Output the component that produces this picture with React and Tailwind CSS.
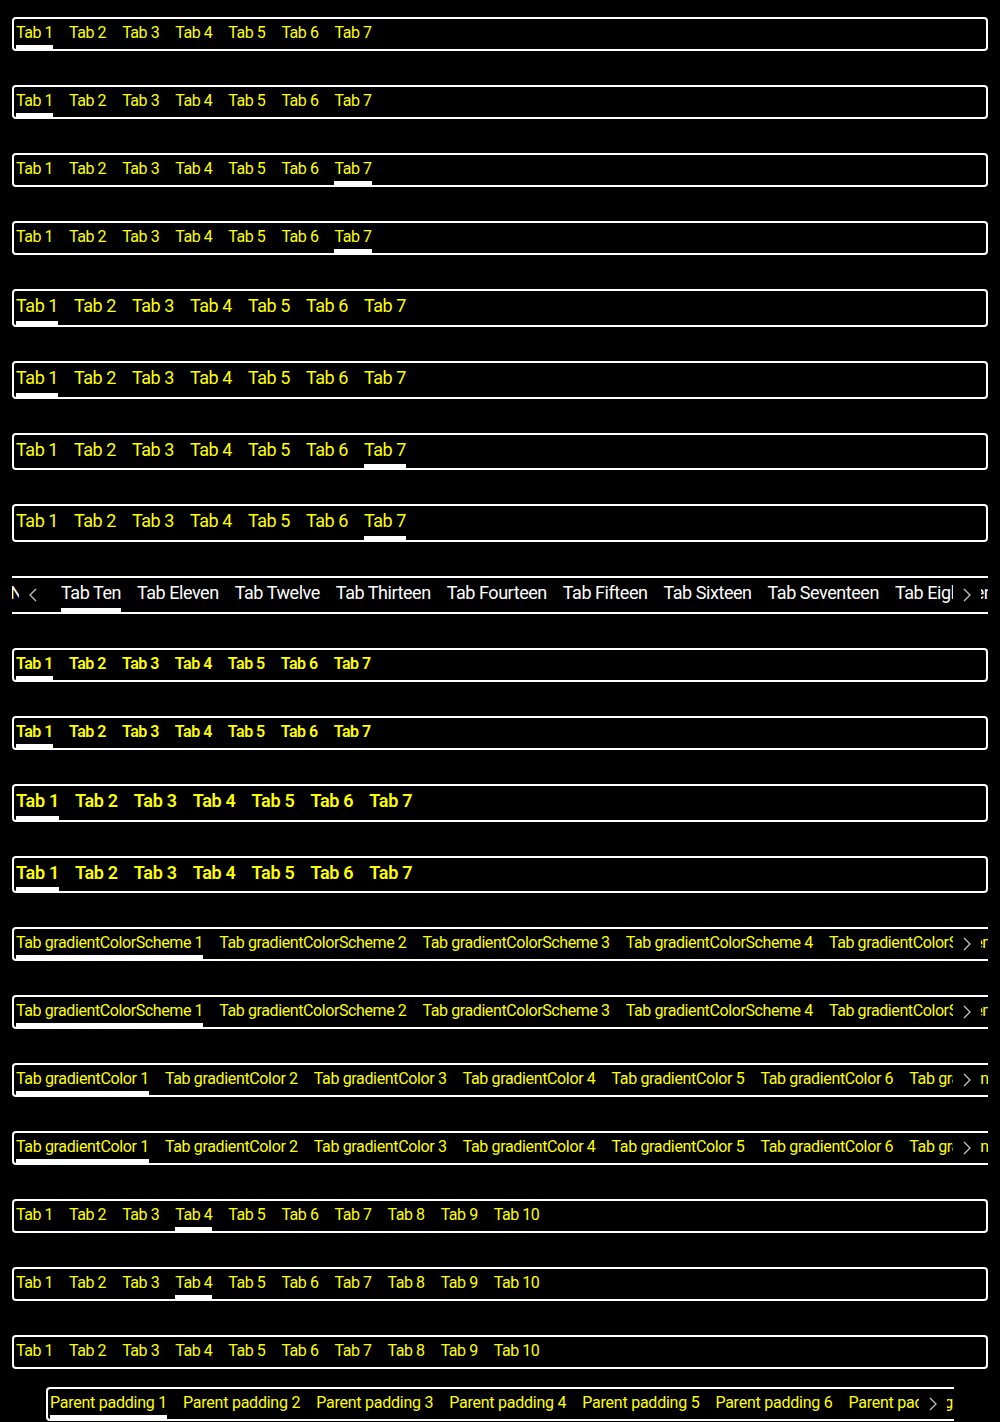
import React from 'react';

const SEVEN = ['Tab 1', 'Tab 2', 'Tab 3', 'Tab 4', 'Tab 5', 'Tab 6', 'Tab 7'];
const TEN = [...SEVEN, 'Tab 8', 'Tab 9', 'Tab 10'];
const SCHEME = [1, 2, 3, 4, 5, 6, 7, 8].map((n) => `Tab gradientColorScheme ${n}`);
const GRADIENT = [1, 2, 3, 4, 5, 6, 7, 8].map((n) => `Tab gradientColor ${n}`);
const PARENT = [1, 2, 3, 4, 5, 6, 7, 8].map((n) => `Parent padding ${n}`);
const WORDS = ['Ten', 'Eleven', 'Twelve', 'Thirteen', 'Fourteen', 'Fifteen', 'Sixteen', 'Seventeen', 'Eighteen', 'Nineteen', 'Twenty'];

const TEXT = {
  sm: 'text-[16px] leading-[24px] tracking-[-0.45px]',
  lg: 'text-[18px] leading-[26px] tracking-[-0.45px]',
  smBold: 'text-[16px] leading-[24px] tracking-[-0.5px] font-semibold',
  lgBold: 'text-[18px] leading-[26px] tracking-[-0.3px] font-semibold',
  scheme: 'text-[16px] leading-[24px] tracking-[-0.4px]',
  gradient: 'text-[16px] leading-[24px] tracking-[-0.35px]',
  parent: 'text-[16px] leading-[24px] tracking-[-0.24px]',
};

const HEIGHT = {
  sm: 'h-[34px]',
  lg: 'h-[37.75px]',
  smBold: 'h-[34px]',
  lgBold: 'h-[37.75px]',
};

function Tab({ label, active, text }) {
  return (
    <div className="relative shrink-0 whitespace-nowrap pt-[2px]">
      <span className={`block ${text}`}>{label}</span>
      {active && <span className="absolute bottom-0 left-0 right-0 h-[4px] bg-white" />}
    </div>
  );
}

function Chevron({ left }) {
  return (
    <svg width="8" height="14" viewBox="0 0 8 14" fill="none" stroke="currentColor" strokeWidth="1.3">
      {left ? <polyline points="7,1 1,7 7,13" /> : <polyline points="1,1 7,7 1,13" />}
    </svg>
  );
}

function ScrollButton({ left }) {
  return (
    <div
      className={`absolute top-0 bottom-0 flex w-[28px] items-center justify-center bg-black text-[#c4c4c4] ${
        left ? 'left-[7px]' : 'right-[7px]'
      }`}
    >
      <Chevron left={left} />
    </div>
  );
}

function Bar({ tabs, active, size = 'sm' }) {
  return (
    <div className={`flex rounded-[4px] border-2 border-white px-[2px] ${HEIGHT[size]}`}>
      <div className="flex gap-[16px]">
        {tabs.map((t, i) => (
          <Tab key={t} label={t} active={i === active} text={TEXT[size]} />
        ))}
      </div>
    </div>
  );
}

function OverflowBar({ tabs, active, text }) {
  return (
    <div className="relative flex h-[34px] overflow-hidden rounded-l-[4px] border-y-2 border-l-2 border-white px-[2px]">
      <div className="flex gap-[16px]">
        {tabs.map((t, i) => (
          <Tab key={t} label={t} active={i === active} text={text} />
        ))}
      </div>
      <ScrollButton />
    </div>
  );
}

function ScrolledBar() {
  return (
    <div className="relative flex h-[37.75px] overflow-hidden border-y-2 border-white text-white">
      <div className="flex gap-[16px]">
        <div className="flex w-[33px] shrink-0 justify-end overflow-hidden">
          <Tab label="Tab Nine" text={TEXT.lg} />
        </div>
        {WORDS.map((w, i) => (
          <Tab key={w} label={`Tab ${w}`} active={i === 0} text={TEXT.lg} />
        ))}
      </div>
      <ScrollButton left />
      <ScrollButton />
    </div>
  );
}

export default function App() {
  return (
    <div className="min-h-screen bg-black font-['Roboto',sans-serif] text-[#ffff00]">
      <div className="flex flex-col gap-[34px] px-[12px] pt-[17px]">
        <Bar tabs={SEVEN} active={0} />
        <Bar tabs={SEVEN} active={0} />
        <Bar tabs={SEVEN} active={6} />
        <Bar tabs={SEVEN} active={6} />
        <Bar tabs={SEVEN} active={0} size="lg" />
        <Bar tabs={SEVEN} active={0} size="lg" />
        <Bar tabs={SEVEN} active={6} size="lg" />
        <Bar tabs={SEVEN} active={6} size="lg" />
        <ScrolledBar />
        <Bar tabs={SEVEN} active={0} size="smBold" />
        <Bar tabs={SEVEN} active={0} size="smBold" />
        <Bar tabs={SEVEN} active={0} size="lgBold" />
        <Bar tabs={SEVEN} active={0} size="lgBold" />
        <OverflowBar tabs={SCHEME} active={0} text={TEXT.scheme} />
        <OverflowBar tabs={SCHEME} active={0} text={TEXT.scheme} />
        <OverflowBar tabs={GRADIENT} active={0} text={TEXT.gradient} />
        <OverflowBar tabs={GRADIENT} active={0} text={TEXT.gradient} />
        <Bar tabs={TEN} active={3} />
        <Bar tabs={TEN} active={3} />
        <Bar tabs={TEN} active={-1} />
        <div className="-mt-[16px] px-[34px]">
          <OverflowBar tabs={PARENT} active={0} text={TEXT.parent} />
        </div>
      </div>
    </div>
  );
}
